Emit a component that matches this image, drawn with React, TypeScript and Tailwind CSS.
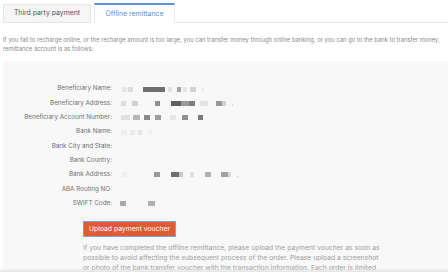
import React from 'react'

type Block = [number, number, string]

// blurred (redacted) values, as [left offset, width, colour]
const ROWS: { label: string; blocks: Block[]; tail?: string }[] = [
  {
    label: 'Beneficiary Name',
    blocks: [[2, 5, '#e6e6e6'], [8, 5, '#dcdcdc'], [23, 22, '#6f6f6f'], [48, 4, '#e2e2e2'], [57, 4, '#a5a5a5'], [63, 4, '#e4e4e4'], [70, 6, '#d2d2d2']],
    tail: ':',
  },
  {
    label: 'Beneficiary Address',
    blocks: [[1, 5, '#dedede'], [12, 6, '#d0d0d0'], [35, 5, '#8f8f8f'], [51, 10, '#5f5f5f'], [61, 8, '#9a9a9a'], [69, 6, '#7d7d7d'], [80, 8, '#e4e4e4'], [96, 6, '#9a9a9a'], [102, 4, '#cfcfcf']],
    tail: ',',
  },
  {
    label: 'Beneficiary Account Number',
    blocks: [[1, 9, '#e0e0e0'], [13, 7, '#b5b5b5'], [24, 6, '#8a8a8a'], [35, 6, '#9c9c9c'], [50, 6, '#e6e6e6'], [62, 6, '#8f8f8f'], [78, 5, '#7a7a7a']],
  },
  {
    label: 'Bank Name',
    blocks: [[1, 6, '#efefef'], [10, 5, '#ececec'], [18, 4, '#e6e6e6'], [28, 4, '#f0f0f0']],
  },
  { label: 'Bank City and State', blocks: [] },
  { label: 'Bank Country', blocks: [] },
  {
    label: 'Bank Address',
    blocks: [[2, 5, '#f0f0f0'], [34, 6, '#9a9a9a'], [51, 8, '#6e6e6e'], [59, 4, '#c8c8c8'], [70, 4, '#e0e0e0'], [85, 6, '#b0b0b0'], [101, 7, '#a0a0a0'], [108, 3, '#d8d8d8']],
    tail: ',',
  },
  { label: 'ABA Routing NO', blocks: [] },
  {
    label: 'SWIFT Code',
    blocks: [[0, 6, '#a8a8a8'], [28, 7, '#b0b0b0']],
  },
]

function Mosaic({ blocks, tail }: { blocks: Block[]; tail?: string }) {
  const last = blocks[blocks.length - 1]
  return (
    <div className="relative h-[5px] w-[140px]">
      {blocks.map(([left, width, color], i) => (
        <span key={i} className="absolute top-0 h-[5px]" style={{ left, width, background: color }} />
      ))}
      {tail && last && (
        <span className="absolute top-[-2px] text-[5px] leading-[8px] text-[#777]" style={{ left: last[0] + last[1] + 6 }}>
          {tail}
        </span>
      )}
    </div>
  )
}

export default function App() {
  return (
    <div className="relative w-[448px] h-[272px] overflow-hidden bg-white font-['Inter',sans-serif]">
      {/* tabs */}
      <div className="flex items-end pt-[3px] pl-[3px]">
        <div className="w-[88px] h-[19px] bg-[#f6f6f6] border border-[#e6e6e6] flex items-center justify-center text-[6.9px] text-[#555]">
          Third party payment
        </div>
        <div className="ml-[3px] w-[81px] h-[20px] bg-white border-t-2 border-t-[#5b8fd9] border-x border-x-[#ececec] flex items-center justify-center text-[6.9px] text-[#5a8ede]">
          Offline remittance
        </div>
        <div className="flex-1 border-b border-[#e6e6e6]" />
      </div>

      <p className="mt-[12px] px-[3px] text-[5.85px] leading-[9px] text-[#8a8a8a] whitespace-nowrap">
        If you fail to recharge online, or the recharge amount is too large, you can transfer money through online banking, or you can go to the bank to transfer money,
        <br />
        remittance account is as follows:
      </p>

      <div className="mt-[8px] ml-[3px] h-[300px] bg-[#f8f8f8] pt-[21px]">
        {ROWS.map(r => (
          <div key={r.label} className="flex items-center h-[14.3px]">
            <div className="w-[109px] shrink-0 text-right text-[6.3px] text-[#707070] whitespace-nowrap">{r.label}:</div>
            <div className="ml-[8px]">
              <Mosaic blocks={r.blocks} tail={r.tail} />
            </div>
          </div>
        ))}

        <div className="pl-[80px] mt-[10px]">
          <button className="w-[93px] h-[16px] bg-[#e05a33] border border-[#7aa2dc] text-white text-[6.8px] flex items-center justify-center">
            Upload payment voucher
          </button>
          <p className="mt-[6px] text-[6.8px] leading-[10px] text-[#a0a0a0] whitespace-nowrap">
            If you have completed the offline remittance, please upload the payment voucher as soon as
            <br />
            possible to avoid affecting the subsequent process of the order. Please upload a screenshot
            <br />
            or photo of the bank transfer voucher with the transaction information. Each order is limited
          </p>
        </div>
      </div>

      <div className="absolute left-0 right-0 bottom-0 h-[4px] bg-gradient-to-b from-transparent to-[#e4e4e4]" />
    </div>
  )
}
